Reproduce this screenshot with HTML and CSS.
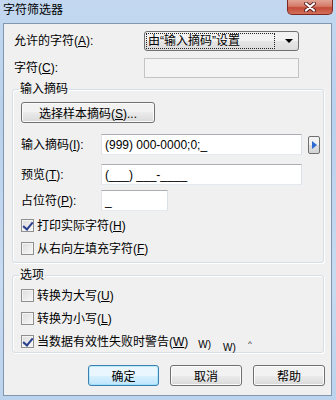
FILE: index.html
```html
<!DOCTYPE html>
<html lang="zh-CN">
<head>
    <meta charset="UTF-8">
    <title>字符筛选器</title>
    <link rel="stylesheet" href="styles.css">
</head>
<body>
    <div class="window">
        <div class="titlebar">
            <div class="title">字符筛选器</div>
            <div class="close">
                <svg width="14" height="10" viewBox="0 0 14 10">
                    <path d="M3 1.5 L11 8.5 M11 1.5 L3 8.5" stroke="#5a2020" stroke-width="4" stroke-linecap="round"/>
                    <path d="M3 1.5 L11 8.5 M11 1.5 L3 8.5" stroke="#ffffff" stroke-width="2.2" stroke-linecap="round"/>
                </svg>
            </div>
        </div>

        <div class="client">
            <div class="row top-row">
                <span class="label wide">允许的字符(<u>A</u>):</span>
                <div class="select">
                    <span class="select-text">由“输入摘码”设置</span>
                    <span class="select-arrow"></span>
                </div>
            </div>
            <div class="row top-row last">
                <span class="label wide">字符(<u>C</u>):</span>
                <div class="field disabled"></div>
            </div>

            <fieldset class="group mask-group">
                <legend>输入摘码</legend>
                <div class="group-body">
                    <button class="btn sample">选择样本摘码(<u>S</u>)...</button>
                    <div class="row field-row first">
                        <span class="label">输入摘码(<u>I</u>):</span>
                        <div class="field long">(999) 000-0000;0;_</div>
                        <span class="mini-btn"><span class="tri"></span></span>
                    </div>
                    <div class="row field-row">
                        <span class="label">预览(<u>T</u>):</span>
                        <div class="field long">(___) ___-____</div>
                    </div>
                    <div class="row field-row small-gap">
                        <span class="label">占位符(<u>P</u>):</span>
                        <div class="field short">_</div>
                    </div>
                    <label class="check first-check"><span class="box checked"></span>打印实际字符(<u>H</u>)</label>
                    <label class="check"><span class="box"></span>从右向左填充字符(<u>F</u>)</label>
                </div>
            </fieldset>

            <fieldset class="group option-group">
                <legend>选项</legend>
                <div class="group-body">
                    <label class="check"><span class="box"></span>转换为大写(<u>U</u>)</label>
                    <label class="check"><span class="box"></span>转换为小写(<u>L</u>)</label>
                    <label class="check"><span class="box checked"></span>当数据有效性失败时警告(<u>W</u>)<span class="glitch">W)</span><span class="glitch two">W)</span><span class="glitch three">^</span></label>
                </div>
            </fieldset>

            <div class="buttons">
                <button class="btn default">确定</button>
                <button class="btn">取消</button>
                <button class="btn">帮助</button>
            </div>
        </div>
    </div>
</body>
</html>
```

FILE: styles.css
```css
* {
    box-sizing: border-box;
}

body {
    margin: 0;
    font-family: "Liberation Sans", "Noto Sans CJK SC", sans-serif;
    font-size: 12px;
    color: #000;
}

u {
    text-decoration: underline;
    text-underline-offset: 1px;
}

.window {
    width: 336px;
    height: 400px;
    display: flex;
    flex-direction: column;
    background: linear-gradient(#c3d8f0, #bad1ec 30%, #c7dbf1 70%, #bcd3ed);
}

/* title bar */
.titlebar {
    height: 23px;
    display: flex;
    align-items: flex-start;
}

.title {
    padding: 3px 0 0 3px;
    line-height: 14px;
    font-size: 12px;
}

.close {
    margin-left: auto;
    margin-right: 3px;
    width: 46px;
    height: 15px;
    border: 1px solid #7a2a22;
    border-top: none;
    border-radius: 0 0 5px 5px;
    background: linear-gradient(#e0a494, #d57a6a 45%, #c24b38 55%, #d2705a);
    display: flex;
    align-items: center;
    justify-content: center;
}

/* client area */
.client {
    margin: 0 4px 4px 3px;
    flex: 1;
    background: #f0f0f0;
    border: 1px solid #8396b0;
    padding-top: 7px;
    display: flex;
    flex-direction: column;
}

.row {
    display: flex;
    align-items: center;
}

.top-row {
    height: 20px;
    padding-left: 10px;
    margin-bottom: 7px;
}

.top-row.last {
    margin-bottom: 0;
}

.label {
    flex: none;
    width: 80px;
    line-height: 14px;
}

.label.wide {
    width: 130px;
}

.select {
    width: 155px;
    height: 20px;
    border: 1px solid #707070;
    border-radius: 3px;
    background: linear-gradient(#f2f2f2 50%, #e5e5e5 50%, #dddddd);
    display: flex;
    align-items: center;
    padding: 1px;
}

.select-text {
    flex: 1;
    height: 16px;
    line-height: 14px;
    border: 1px dotted #222;
    padding-left: 1px;
    margin-right: 10px;
}

.select-arrow {
    width: 0;
    height: 0;
    border-left: 4px solid transparent;
    border-right: 4px solid transparent;
    border-top: 4px solid #000;
    margin-right: 4px;
}

.field {
    height: 21px;
    background: #fff;
    border: 1px solid #abadb3;
    border-left-color: #e2e3ea;
    border-right-color: #dbdfe6;
    border-bottom-color: #e3e9ef;
    padding: 3px 0 0 3px;
    line-height: 14px;
    white-space: nowrap;
}

.field.disabled {
    width: 155px;
    height: 20px;
    background: #f4f4f4;
    border: 1px solid #c4c4c4;
}

.field.long {
    width: 201px;
}

.field.short {
    width: 67px;
}

/* group boxes */
.group {
    margin: 4px 7px 0 8px;
    padding: 0;
    border: 1px solid #d5dfe5;
    border-radius: 3px;
    box-shadow: inset 1px 1px 0 #fff, 1px 1px 0 #fff;
}

.group legend {
    margin-left: 6px;
    padding: 0 1px;
    line-height: 14px;
}

.group-body {
    padding: 6px 0 0 8px;
}

.mask-group .group-body {
    height: 166px;
}

.option-group {
    margin-top: 5px;
}

.option-group .group-body {
    padding-top: 2px;
    height: 70px;
}

.field-row {
    height: 21px;
    margin-top: 9px;
}

.field-row.first {
    margin-top: 11px;
}

.field-row.small-gap {
    margin-top: 5px;
}

.mini-btn {
    width: 12px;
    height: 18px;
    margin-left: 6px;
    border: 1px solid #707070;
    border-radius: 2px;
    background: linear-gradient(#f2f2f2 50%, #e0e0e0 50%, #d4d4d4);
    display: flex;
    align-items: center;
    justify-content: center;
}

.tri {
    width: 0;
    height: 0;
    border-top: 4px solid transparent;
    border-bottom: 4px solid transparent;
    border-left: 5px solid #2d6ad1;
    margin-left: 1px;
}

.check {
    display: flex;
    align-items: center;
    height: 23px;
    line-height: 14px;
    white-space: nowrap;
}

.first-check {
    margin-top: 3px;
}

.box {
    width: 13px;
    height: 13px;
    margin-right: 3px;
    border: 1px solid #8e8f8f;
    background: linear-gradient(135deg, #dcdcdc, #f8f8f8);
    box-shadow: inset 0 0 0 1px #f4f4f4;
    position: relative;
}

.box.checked::after {
    content: "";
    position: absolute;
    left: 3px;
    top: 0;
    width: 4px;
    height: 8px;
    border-right: 2px solid #2a3f8c;
    border-bottom: 2px solid #2a3f8c;
    transform: rotate(40deg);
}

.glitch {
    font-size: 10px;
    align-self: flex-end;
    margin-left: 10px;
    margin-bottom: 1px;
}

.glitch.two {
    margin-left: 12px;
    margin-bottom: -2px;
}

.glitch.three {
    margin-left: 12px;
    margin-bottom: 2px;
    font-size: 8px;
}

/* dialog buttons */
.buttons {
    display: flex;
    justify-content: flex-end;
    gap: 11px;
    margin-top: 12px;
    padding-right: 6px;
}

.btn {
    font-family: inherit;
    font-size: 12px;
    height: 21px;
    padding: 0;
    border: 1px solid #707070;
    border-radius: 3px;
    background: linear-gradient(#f2f2f2 50%, #ebebeb 50%, #dddddd 90%, #cfcfcf);
    box-shadow: inset 0 0 0 1px #fcfcfc;
    color: #000;
}

.buttons .btn {
    width: 72px;
}

.buttons .btn.default {
    width: 71px;
    border-color: #3c7fb1;
    background: linear-gradient(#eaf6fd 50%, #d9f0fc 50%, #bee6fd);
    box-shadow: inset 0 0 0 1px #48d2fd44;
}

.btn.sample {
    width: 134px;
    display: block;
}
```
